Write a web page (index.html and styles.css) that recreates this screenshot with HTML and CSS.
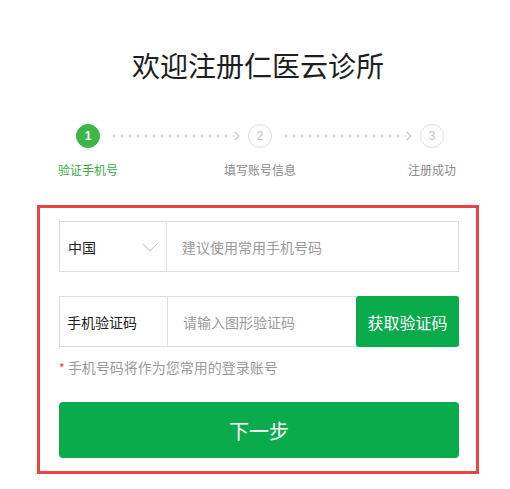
FILE: index.html
```html
<!DOCTYPE html>
<html lang="zh-CN">
<head>
<meta charset="utf-8">
<title>欢迎注册仁医云诊所</title>
<link rel="stylesheet" href="styles.css">
</head>
<body>
<div class="page">
  <h1 class="title">欢迎注册仁医云诊所</h1>

  <div class="steps">
    <div class="step step-active">
      <span class="step-num">1</span>
      <span class="step-label">验证手机号</span>
    </div>
    <div class="step-line">
      <span class="dots"></span>
      <svg class="arrow" width="6" height="10" viewBox="0 0 6 10"><path d="M0.8 1 L5 5 L0.8 9" fill="none" stroke="#c8c8c8" stroke-width="1.1"/></svg>
    </div>
    <div class="step">
      <span class="step-num">2</span>
      <span class="step-label">填写账号信息</span>
    </div>
    <div class="step-line">
      <span class="dots"></span>
      <svg class="arrow" width="6" height="10" viewBox="0 0 6 10"><path d="M0.8 1 L5 5 L0.8 9" fill="none" stroke="#c8c8c8" stroke-width="1.1"/></svg>
    </div>
    <div class="step">
      <span class="step-num">3</span>
      <span class="step-label">注册成功</span>
    </div>
  </div>

  <form class="form-box">
    <div class="field">
      <div class="field-select">
        <span>中国</span>
        <svg class="chevron" width="16" height="9" viewBox="0 0 16 9"><path d="M0.7 0.7 L8 7.8 L15.3 0.7" fill="none" stroke="#bdbdbd" stroke-width="1"/></svg>
      </div>
      <input class="field-input" type="text" placeholder="建议使用常用手机号码">
    </div>

    <div class="field field-code">
      <div class="field-label">手机验证码</div>
      <input class="field-input" type="text" placeholder="请输入图形验证码">
      <button class="code-btn" type="button">获取验证码</button>
    </div>

    <p class="note"><span class="star">*</span> 手机号码将作为您常用的登录账号</p>

    <button class="next-btn" type="button">下一步</button>
  </form>
</div>
</body>
</html>
```

FILE: styles.css
```css
* {
  box-sizing: border-box;
}

body {
  margin: 0;
  background: #ffffff;
  font-family: "Noto Sans CJK SC", "Noto Sans", "Liberation Sans", sans-serif;
  color: #333333;
}

.page {
  width: 442px;
  margin-left: 37px;
}

.title {
  margin: 45px 0 0;
  height: 40px;
  font-size: 28px;
  line-height: 40px;
  font-weight: normal;
  color: #1e1e1e;
  text-align: center;
}

.steps {
  display: flex;
  width: 424px;
  margin: 39px 0 0 11px;
}

.step {
  width: 80px;
  display: flex;
  flex-direction: column;
  align-items: center;
  position: relative;
  z-index: 1;
}

.step-num {
  width: 24px;
  height: 24px;
  border-radius: 50%;
  border: 1px solid #dddddd;
  background: #ffffff;
  color: #c4c4c4;
  font-family: "Liberation Sans", Arial, sans-serif;
  font-size: 12px;
  line-height: 22px;
  text-align: center;
}

.step-label {
  margin-top: 14px;
  font-size: 12px;
  line-height: 16px;
  color: #8a8a8a;
  white-space: nowrap;
}

.step-active .step-num {
  background: #3cb54a;
  border-color: #3cb54a;
  color: #ffffff;
  font-weight: bold;
}

.step-active .step-label {
  color: #3aa948;
}

.step-line {
  flex: 1;
  height: 24px;
  margin: 0 -20px 0 -15px;
  display: flex;
  align-items: center;
  position: relative;
  z-index: 2;
}

.dots {
  flex: 1;
  height: 2px;
  background-image: linear-gradient(to right, #cfcfcf 2px, transparent 2px);
  background-size: 8px 2px;
  background-repeat: repeat-x;
}

.arrow {
  display: block;
  margin-left: 0;
}

.form-box {
  margin: 27px 0 0;
  width: 442px;
  border: 3px solid #e94343;
  padding: 13px 17px 13px 19px;
}

.field {
  display: flex;
  height: 51px;
  border: 1px solid #dddddd;
  background: #ffffff;
}

.field-code {
  margin-top: 24px;
}

.field-select {
  width: 107px;
  display: flex;
  align-items: center;
  justify-content: space-between;
  padding: 0 8px 0 8px;
  border-right: 1px solid #dddddd;
  font-size: 14px;
  color: #222222;
}

.chevron {
  display: block;
  margin-top: 1px;
}

.field-label {
  width: 108px;
  display: flex;
  align-items: center;
  padding-left: 7px;
  border-right: 1px solid #dddddd;
  font-size: 14px;
  color: #222222;
}

.field-input {
  flex: 1;
  min-width: 0;
  border: none;
  outline: none;
  padding: 0 0 0 15px;
  font-family: inherit;
  font-size: 14px;
  color: #333333;
  background: transparent;
}

.field-input::placeholder {
  color: #9a9a9a;
}

.code-btn {
  width: 103px;
  margin: -1px -1px 0 0;
  height: 51px;
  border: none;
  border-radius: 3px;
  background: #0aab4b;
  color: #ffffff;
  font-family: inherit;
  font-size: 16px;
  padding: 0;
  cursor: pointer;
}

.note {
  margin: 10px 0 0;
  font-size: 14px;
  line-height: 20px;
  color: #9a9a9a;
}

.star {
  color: #e43b3b;
  font-size: 12px;
}

.next-btn {
  display: block;
  width: 400px;
  height: 56px;
  margin-top: 24px;
  border: none;
  border-radius: 4px;
  background: #0aab4b;
  color: #ffffff;
  font-family: inherit;
  font-size: 20px;
  padding: 0;
  cursor: pointer;
}
```
